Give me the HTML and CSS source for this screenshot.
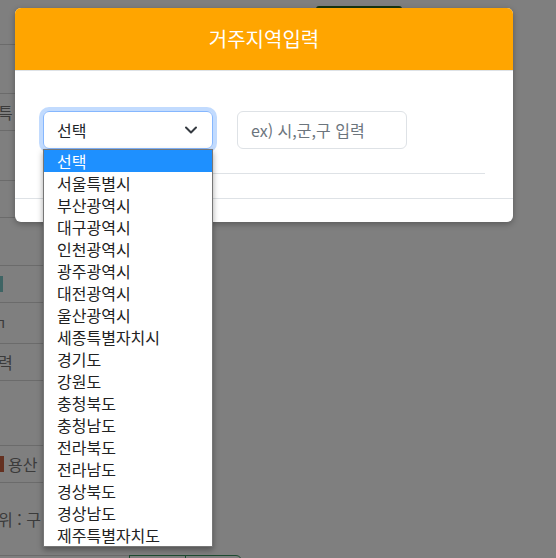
FILE: index.html
```html
<!DOCTYPE html>
<html lang="ko">
<head>
<meta charset="utf-8">
<title>거주지역입력</title>
<link rel="stylesheet" href="styles.css">
</head>
<body>
<div class="page">
  <div class="topbar"><span class="green-btn"></span></div>
  <div class="table">
    <div class="row h49"></div>
    <div class="row h37"><span class="cell-text">특</span></div>
    <div class="row h50"></div>
    <div class="row h37"></div>
    <div class="row h48"></div>
    <div class="row h37"><span class="teal-mark"></span></div>
    <div class="row h41"><span class="cell-text small">ㄱ</span></div>
    <div class="row h37"><span class="cell-text">력</span></div>
    <div class="row h65"></div>
    <div class="row h37"><span class="red-bar"></span><span class="cell-text">용산</span></div>
    <div class="row h73"><span class="cell-text">위 : 구</span></div>
  </div>
  <div class="bottom-boxes"><span class="bbox"></span><span class="bbox"></span></div>
</div>

<div class="overlay"></div>

<div class="modal">
  <div class="modal-header">거주지역입력</div>
  <div class="modal-body">
    <div class="form-row">
      <div class="select-wrap">
        <div class="select">
          <span>선택</span>
          <svg class="chev" width="14" height="10" viewBox="0 0 14 10"><polyline points="2,2.5 7,7.5 12,2.5" fill="none" stroke="#343a40" stroke-width="2" stroke-linecap="round" stroke-linejoin="round"/></svg>
        </div>
        <ul class="options">
          <li class="active">선택</li>
          <li>서울특별시</li>
          <li>부산광역시</li>
          <li>대구광역시</li>
          <li>인천광역시</li>
          <li>광주광역시</li>
          <li>대전광역시</li>
          <li>울산광역시</li>
          <li>세종특별자치시</li>
          <li>경기도</li>
          <li>강원도</li>
          <li>충청북도</li>
          <li>충청남도</li>
          <li>전라북도</li>
          <li>전라남도</li>
          <li>경상북도</li>
          <li>경상남도</li>
          <li>제주특별자치도</li>
        </ul>
      </div>
      <input class="text-input" type="text" placeholder="ex) 시,군,구 입력">
    </div>
    <div class="divider"></div>
  </div>
  <div class="modal-footer"></div>
</div>
</body>
</html>
```

FILE: styles.css
```css
* { box-sizing: border-box; }
html, body { margin: 0; padding: 0; }
body {
  width: 556px;
  height: 558px;
  overflow: hidden;
  position: relative;
  background: #fff;
  font-family: "Noto Sans CJK KR", "Noto Sans", sans-serif;
}

/* background page (dimmed) */
.page { width: 556px; }
.topbar { height: 44px; padding-top: 6px; }
.green-btn {
  display: block;
  margin-left: 316px;
  width: 86px;
  height: 30px;
  background: #2f6b22;
  border-radius: 3px;
}
.table { width: 200px; border-top: 1px solid #d6d6d6; }
.row {
  border-bottom: 1px solid #d6d6d6;
  display: flex;
  align-items: center;
  gap: 6px;
}
.h49 { height: 49px; }
.h37 { height: 37px; }
.h50 { height: 50px; }
.h48 { height: 48px; }
.h41 { height: 41px; }
.h65 { height: 65px; }
.h73 { height: 73px; }
.cell-text { color: #777; font-size: 16px; margin-left: -2px; }
.cell-text.small { margin-left: -8px; }
.teal-mark { display: block; width: 3px; height: 16px; background: #7cc8c8; }
.red-bar { display: block; width: 4px; height: 16px; background: #c86040; }
.bottom-boxes {
  display: flex;
  margin-left: 129px;
  margin-top: -1px;
}
.bbox {
  display: block;
  width: 57px;
  height: 20px;
  border: 1px solid #3a9460;
}
.bbox + .bbox { margin-left: -1px; border-radius: 0 6px 0 0; }

.overlay {
  position: absolute;
  inset: 0;
  background: rgba(0, 0, 0, 0.5);
}

/* modal */
.modal {
  position: absolute;
  left: 15px;
  top: 8px;
  width: 498px;
  background: #fff;
  border-radius: 6px;
  box-shadow: 0 2px 6px rgba(0, 0, 0, 0.3);
}
.modal-header {
  height: 63px;
  background: #ffa500;
  border-bottom: 1px solid #dee2e6;
  border-radius: 6px 6px 0 0;
  color: #fff;
  font-size: 20px;
  display: flex;
  align-items: center;
  justify-content: center;
  padding-bottom: 1px;
}
.modal-body { padding: 40px 28px 24px; }
.form-row { display: flex; gap: 24px; align-items: flex-start; }
.select-wrap { position: relative; width: 170px; }
.select {
  height: 38px;
  border: 1px solid #86b7fe;
  border-radius: 6px;
  box-shadow: 0 0 0 4px rgba(13, 110, 253, 0.25);
  display: flex;
  align-items: center;
  justify-content: space-between;
  padding: 0 13px;
  font-size: 16px;
  color: #212529;
}
.chev { margin-right: 1px; }
.options {
  position: absolute;
  left: 0;
  top: 100%;
  width: 170px;
  margin: 0;
  padding: 0;
  list-style: none;
  background: #fff;
  border: 1px solid #767676;
  box-shadow: 0 3px 6px rgba(0, 0, 0, 0.35);
  z-index: 5;
}
.options li {
  height: 22px;
  line-height: 22px;
  padding-left: 13px;
  font-size: 16px;
  color: #222;
}
.options li.active { background: #1e90ff; color: #fff; }
.text-input {
  width: 170px;
  height: 38px;
  border: 1px solid #dee2e6;
  border-radius: 6px;
  padding: 0 13px;
  font-size: 16px;
  font-family: "Noto Sans CJK KR", "Noto Sans", sans-serif;
  color: #212529;
  outline: none;
}
.text-input::placeholder { color: #6c757d; }
.divider { height: 1px; background: #dee2e6; margin-top: 24px; }
.modal-footer { height: 24px; border-top: 1px solid #dee2e6; }
```
